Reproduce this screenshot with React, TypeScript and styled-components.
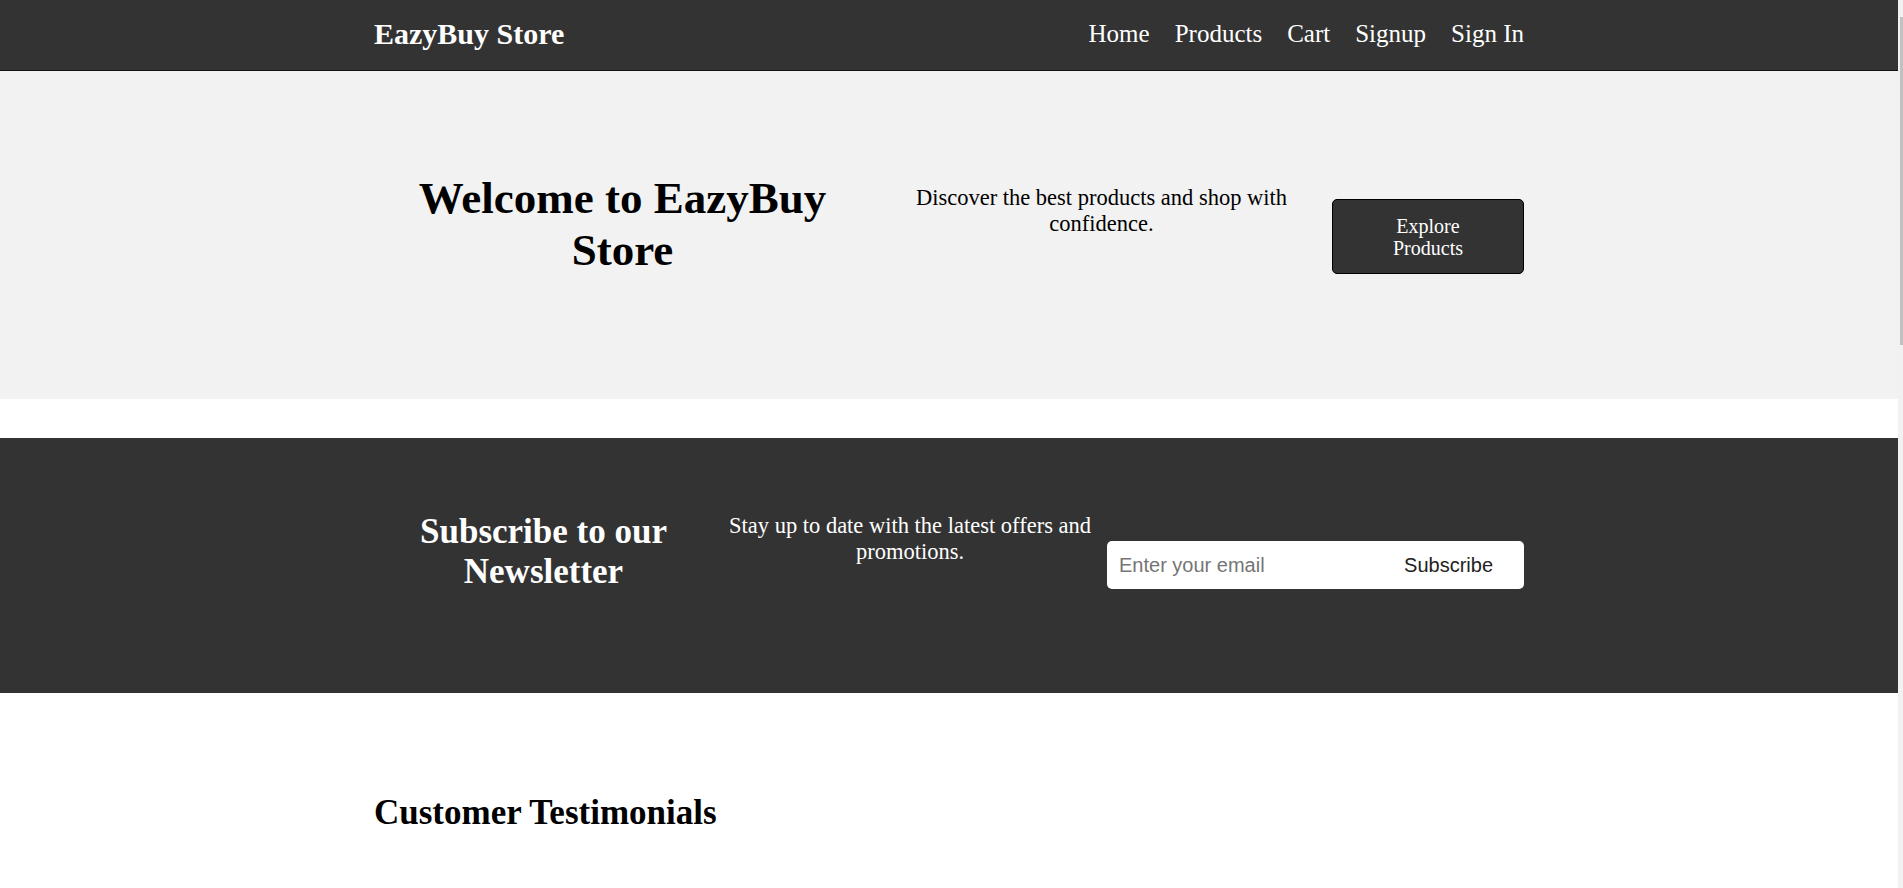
import React from "react";
import styled, { createGlobalStyle } from "styled-components";

const GlobalStyle = createGlobalStyle`
  html { margin: 0; padding: 0; background: #f1f1f1; overflow: hidden; }
  body {
    margin: 0 5px 0 0;
    padding: 0;
    background: #fff;
    font-family: "Liberation Serif", "Times New Roman", serif;
    color: #000;
  }
  * { box-sizing: border-box; }
`;

const ScrollThumb = styled.div`
  position: fixed;
  top: 17px;
  right: 0;
  width: 3px;
  height: 328px;
  background: #c1c1c1;
`;

const Container = styled.div`
  max-width: 1150px;
  margin: 0 auto;
`;

const Header = styled.header`
  background: #333;
  border-bottom: 1px solid #111;
  height: 71px;
  padding-top: 16px;
`;

const HeaderRow = styled(Container)`
  display: flex;
  align-items: center;
  justify-content: space-between;
  height: 35px;
`;

const Logo = styled.a`
  color: #fff;
  font-size: 30px;
  font-weight: bold;
  text-decoration: none;
  line-height: normal;
`;

const Nav = styled.nav`
  display: flex;
  gap: 25px;
`;

const NavLink = styled.a`
  color: #fff;
  font-size: 25px;
  text-decoration: none;
  line-height: normal;
`;

const Hero = styled.section`
  background: #f2f2f2;
  height: 328px;
  padding-top: 101px;
`;

const HeroRow = styled(Container)`
  display: grid;
  grid-template-columns: 497px 399px 192px;
  column-gap: 31px;
  align-items: start;
`;

const HeroTitle = styled.h1`
  margin: 0;
  font-size: 45px;
  font-weight: bold;
  text-align: center;
  line-height: normal;
`;

const HeroText = styled.p`
  margin: 12.5px 0 0;
  font-size: 22.5px;
  text-align: center;
  line-height: normal;
`;

const HeroButton = styled.button`
  margin-top: 27px;
  width: 192px;
  height: 75px;
  padding: 0 30px;
  background: #333;
  color: #fff;
  border: 1px solid #000;
  border-radius: 5px;
  font-family: "Liberation Serif", "Times New Roman", serif;
  font-size: 20px;
  line-height: 22px;
  cursor: pointer;
`;

const Newsletter = styled.section`
  margin-top: 39px;
  background: #333;
  height: 255px;
  padding-top: 73.5px;
  color: #fff;
`;

const NewsRow = styled(Container)`
  display: grid;
  grid-template-columns: 339px 372px 417px;
  column-gap: 11px;
  align-items: start;
`;

const SectionTitle = styled.h2<{ $align?: string }>`
  margin: 0;
  font-size: 35px;
  font-weight: bold;
  line-height: normal;
  text-align: ${(p) => p.$align || "left"};
`;

const NewsText = styled.p`
  margin: 1.5px 0 0;
  font-size: 22.5px;
  text-align: center;
  line-height: normal;
`;

const Form = styled.form`
  margin-top: 29.5px;
  display: flex;
  align-items: center;
  height: 48px;
  background: #fff;
  border-radius: 5px;
  overflow: hidden;
`;

const EmailInput = styled.input`
  flex: 1;
  min-width: 0;
  height: 100%;
  border: none;
  outline: none;
  background: transparent;
  padding: 0 12px;
  font-family: "Liberation Sans", Arial, sans-serif;
  font-size: 20px;
  color: #222;
  &::placeholder { color: #757575; }
`;

const SubscribeButton = styled.button`
  height: 100%;
  border: none;
  background: transparent;
  padding: 0 31px 0 24px;
  font-family: "Liberation Sans", Arial, sans-serif;
  font-size: 20px;
  color: #222;
  cursor: pointer;
`;

const Testimonials = styled.section`
  padding-top: 100px;
  min-height: 1619px;
`;

export default function App() {
  return (
    <>
      <GlobalStyle />
      <ScrollThumb />
      <Header>
        <HeaderRow>
          <Logo href="#">EazyBuy Store</Logo>
          <Nav>
            <NavLink href="#">Home</NavLink>
            <NavLink href="#">Products</NavLink>
            <NavLink href="#">Cart</NavLink>
            <NavLink href="#">Signup</NavLink>
            <NavLink href="#">Sign In</NavLink>
          </Nav>
        </HeaderRow>
      </Header>
      <Hero>
        <HeroRow>
          <HeroTitle>Welcome to EazyBuy Store</HeroTitle>
          <HeroText>Discover the best products and shop with confidence.</HeroText>
          <HeroButton type="button">Explore Products</HeroButton>
        </HeroRow>
      </Hero>
      <Newsletter>
        <NewsRow>
          <SectionTitle $align="center">Subscribe to our Newsletter</SectionTitle>
          <NewsText>Stay up to date with the latest offers and promotions.</NewsText>
          <Form onSubmit={(e) => e.preventDefault()}>
            <EmailInput type="email" placeholder="Enter your email" />
            <SubscribeButton type="submit">Subscribe</SubscribeButton>
          </Form>
        </NewsRow>
      </Newsletter>
      <Testimonials>
        <Container>
          <SectionTitle>Customer Testimonials</SectionTitle>
        </Container>
      </Testimonials>
    </>
  );
}
